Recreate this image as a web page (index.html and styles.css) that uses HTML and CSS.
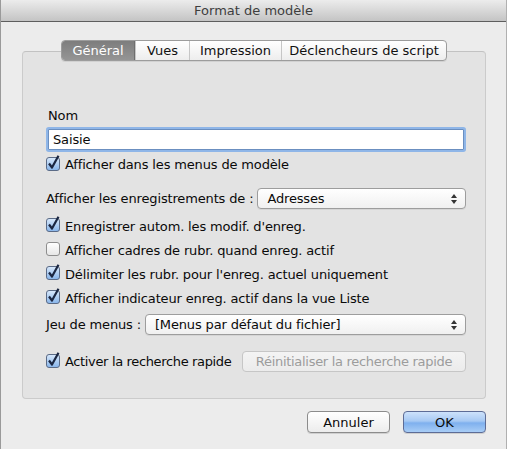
FILE: index.html
```html
<!DOCTYPE html>
<html lang="fr">
<head>
<meta charset="utf-8">
<title>Format de modèle</title>
<link rel="stylesheet" href="styles.css">
</head>
<body>
<div class="window">
  <div class="titlebar">Format de modèle</div>
  <div class="content">
    <div class="tabs">
      <span class="tab active t1">Général</span>
      <span class="tab t2">Vues</span>
      <span class="tab t3">Impression</span>
      <span class="tab t4">Déclencheurs de script</span>
    </div>
    <div class="panel">
      <div class="label">Nom</div>
      <div class="field">Saisie</div>
      <div class="check row-first"><svg class="cb" viewBox="0 0 16 16"><defs><linearGradient id="g1" x1="0" y1="0" x2="0" y2="1"><stop offset="0" stop-color="#d9e9fb"/><stop offset="1" stop-color="#86b4ea"/></linearGradient></defs><rect x="0.5" y="2.5" width="13" height="13" rx="2.5" fill="url(#g1)" stroke="#5b6b86"/><path d="M3 8.5 L6 12.5 L12.5 0.8" fill="none" stroke="#1b2742" stroke-width="2.2" stroke-linejoin="round"/></svg><span>Afficher dans les menus de modèle</span></div>
      <div class="poprow first"><span>Afficher les enregistrements de :</span><div class="popup"><span>Adresses</span><svg class="arr" viewBox="0 0 6 10"><path d="M3 0 L6 4 L0 4 Z M0 6 L6 6 L3 10 Z" fill="#333"/></svg></div></div>
      <div class="group">
        <div class="check"><svg class="cb" viewBox="0 0 16 16"><rect x="0.5" y="2.5" width="13" height="13" rx="2.5" fill="url(#g1)" stroke="#5b6b86"/><path d="M3 8.5 L6 12.5 L12.5 0.8" fill="none" stroke="#1b2742" stroke-width="2.2" stroke-linejoin="round"/></svg><span>Enregistrer autom. les modif. d'enreg.</span></div>
        <div class="check"><svg class="cb" viewBox="0 0 16 16"><defs><linearGradient id="g2" x1="0" y1="0" x2="0" y2="1"><stop offset="0" stop-color="#ffffff"/><stop offset="1" stop-color="#e6e6e6"/></linearGradient></defs><rect x="0.5" y="2.5" width="13" height="13" rx="2.5" fill="url(#g2)" stroke="#8e8e8e"/></svg><span>Afficher cadres de rubr. quand enreg. actif</span></div>
        <div class="check"><svg class="cb" viewBox="0 0 16 16"><rect x="0.5" y="2.5" width="13" height="13" rx="2.5" fill="url(#g1)" stroke="#5b6b86"/><path d="M3 8.5 L6 12.5 L12.5 0.8" fill="none" stroke="#1b2742" stroke-width="2.2" stroke-linejoin="round"/></svg><span>Délimiter les rubr. pour l'enreg. actuel uniquement</span></div>
        <div class="check"><svg class="cb" viewBox="0 0 16 16"><rect x="0.5" y="2.5" width="13" height="13" rx="2.5" fill="url(#g1)" stroke="#5b6b86"/><path d="M3 8.5 L6 12.5 L12.5 0.8" fill="none" stroke="#1b2742" stroke-width="2.2" stroke-linejoin="round"/></svg><span>Afficher indicateur enreg. actif dans la vue Liste</span></div>
      </div>
      <div class="poprow second"><span>Jeu de menus :</span><div class="popup"><span>[Menus par défaut du fichier]</span><svg class="arr" viewBox="0 0 6 10"><path d="M3 0 L6 4 L0 4 Z M0 6 L6 6 L3 10 Z" fill="#333"/></svg></div></div>
      <div class="searchrow"><div class="check tight"><svg class="cb" viewBox="0 0 16 16"><rect x="0.5" y="2.5" width="13" height="13" rx="2.5" fill="url(#g1)" stroke="#5b6b86"/><path d="M3 8.5 L6 12.5 L12.5 0.8" fill="none" stroke="#1b2742" stroke-width="2.2" stroke-linejoin="round"/></svg><span>Activer la recherche rapide</span></div><div class="btn disabled">Réinitialiser la recherche rapide</div></div>
    </div>
    <div class="buttons">
      <div class="btn push">Annuler</div>
      <div class="btn push default">OK</div>
    </div>
  </div>
</div>
</body>
</html>
```

FILE: styles.css
```css
html, body {
  margin: 0;
  padding: 0;
}
body {
  background: #ececec;
  font-family: "DejaVu Sans", "Liberation Sans", sans-serif;
  font-size: 13px;
  letter-spacing: -0.15px;
  color: #0a0a0a;
}
.window {
  width: 507px;
  height: 449px;
  background: #ececec;
  box-sizing: border-box;
  border-left: 1px solid #9a9a9a;
  border-right: 1px solid #b0b0b0;
}
.titlebar {
  height: 21px;
  line-height: 22px;
  text-align: center;
  color: #3e3e3e;
  letter-spacing: 0;
  background: linear-gradient(#ececec, #c4c4c4);
  border-bottom: 1px solid #5e5e5e;
}
.content {
  padding: 18px 0 0 21px;
}
.tabs {
  display: flex;
  width: 384px;
  height: 19px;
  margin: 0 0 -10px 39px;
  position: relative;
  z-index: 1;
  border: 1px solid #9c9c9c;
  border-radius: 4px;
  background: linear-gradient(#ffffff, #ededed);
  overflow: hidden;
  box-shadow: 0 1px 0 rgba(0,0,0,0.08);
  letter-spacing: 0;
}
.tab {
  display: flex;
  align-items: center;
  justify-content: center;
  color: #111;
  border-left: 1px solid #c6c6c6;
}
.tab.t1 { width: 72px; border-left: none; }
.tab.t2 { width: 53px; }
.tab.t3 { width: 91px; }
.tab.t4 { flex: 1; }
.tab.active {
  background: linear-gradient(#7d7d7d, #959595);
  color: #fff;
  border-right: 1px solid #6e6e6e;
}
.panel {
  width: 464px;
  height: 348px;
  box-sizing: border-box;
  background: #e3e3e3;
  border: 1px solid #cbcbcb;
  border-top-color: #c2c2c2;
  border-radius: 4px;
  padding: 56px 19px 0 23px;
}
.label {
  line-height: 16px;
  margin-left: 2px;
}
.field {
  margin: 5px 2px 0 2px;
  height: 19px;
  line-height: 19px;
  padding-left: 4px;
  background: #fff;
  border: 1px solid #6b8fc0;
  box-shadow: 0 0 0 2px #8fb6e8;
  border-radius: 1px;
}
.check {
  display: flex;
  align-items: center;
  height: 23px;
}
.check.tight {
  letter-spacing: -0.35px;
}
.group .check {
  height: 24px;
}
.check .cb {
  width: 16px;
  height: 16px;
  margin: -4px 3px 0 0;
  flex: none;
}
.row-first { margin-top: 3px; }
.poprow {
  display: flex;
  align-items: center;
  gap: 4px;
}
.poprow.first { margin-top: 12px; }
.poprow.second { margin-top: 4px; }
.group { margin-top: 5px; }
.popup {
  flex: 1;
  height: 19px;
  display: flex;
  align-items: center;
  justify-content: space-between;
  padding: 0 8px 0 9px;
  background: linear-gradient(#ffffff, #f0f0f0);
  border: 1px solid #9d9d9d;
  border-radius: 4px;
  box-shadow: 0 1px 0 rgba(0,0,0,0.06);
}
.popup .arr {
  width: 6px;
  height: 10px;
}
.searchrow {
  display: flex;
  align-items: center;
  justify-content: space-between;
  margin-top: 15px;
}
.btn {
  display: flex;
  align-items: center;
  justify-content: center;
  height: 20px;
  border-radius: 4px;
}
.btn.disabled {
  width: 222px;
  height: 19px;
  color: #9c9c9c;
  letter-spacing: -0.3px;
  background: linear-gradient(#f4f4f4, #ebebeb);
  border: 1px solid #c6c6c6;
}
.buttons {
  display: flex;
  justify-content: flex-end;
  gap: 13px;
  padding: 12px 20px 0 0;
}
.btn.push {
  width: 81px;
  letter-spacing: 0;
  background: linear-gradient(#ffffff, #ececec);
  border: 1px solid #8c8c8c;
  box-shadow: 0 1px 0 rgba(0,0,0,0.12);
}
.btn.push.default {
  background: linear-gradient(#cde2fb 0%, #a7c9f3 45%, #7fb0ee 55%, #a8cdf6 100%);
  border-color: #5d6c96;
}
```
